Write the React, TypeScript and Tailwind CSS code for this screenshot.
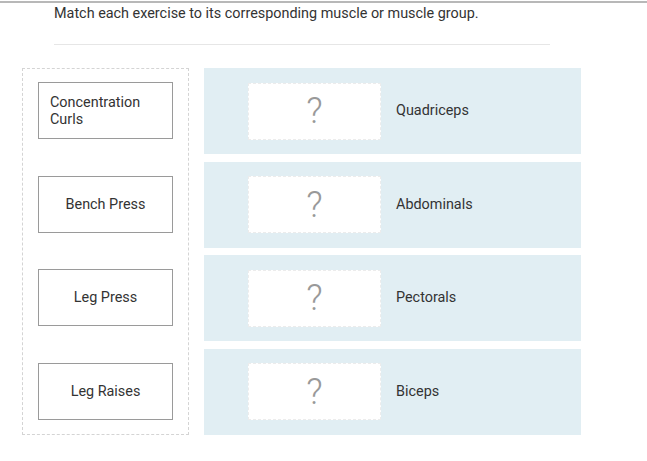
import React from 'react';

const exercises = ["Concentration Curls", "Bench Press", "Leg Press", "Leg Raises"];
const muscles = ["Quadriceps", "Abdominals", "Pectorals", "Biceps"];

const App = () => {
  return (
    <div className="w-[647px] h-[461px] bg-white overflow-hidden font-['Roboto',sans-serif] text-[#333]">
      <div className="h-[3px] border-b-2 border-[#b8b8b8]" />
      <div className="pl-[54px] pt-[1px] text-[14.4px] leading-[20px] text-[#333]">
        Match each exercise to its corresponding muscle or muscle group.
      </div>
      <div className="ml-[54px] mt-[20px] w-[496px] h-px bg-[#e6e6e6]" />
      <div className="flex ml-[22px] mt-[23px] gap-[15px]">
        <div className="flex flex-col w-[167px] h-[367px] border border-dashed border-[#d4d4d4] px-[15px] pt-[13px] gap-[36.6px]">
          {exercises.map((item, index) => (
            <div
              key={index}
              className={
                "flex items-center h-[57px] border border-[#9a9a9a] bg-white text-[14.4px] leading-[17px] text-[#333] " +
                (index == 0 ? "justify-start px-[11px]" : "justify-center")
              }
            >
              {item}
            </div>
          ))}
        </div>
        <div className="flex flex-col w-[377px] gap-[7.5px]">
          {muscles.map((item, index) => (
            <div key={index} className="flex items-center h-[86px] bg-[#e1eef3] pl-[44px]">
              <div className="flex items-center justify-center w-[133px] h-[57px] bg-white border border-dashed border-[#ececec] text-[36px] leading-none font-light text-[#999]">
                ?
              </div>
              <div className="ml-[15px] text-[14.4px] text-[#333]">{item}</div>
            </div>
          ))}
        </div>
      </div>
    </div>
  );
};

export default App;
